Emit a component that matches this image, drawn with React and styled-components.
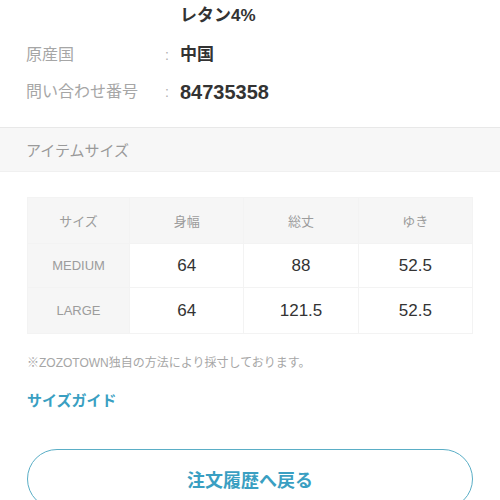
import React from "react";
import styled, { createGlobalStyle } from "styled-components";

const GlobalStyle = createGlobalStyle`
  body {
    margin: 0;
    background: #fff;
    font-family: "Liberation Sans", "Noto Sans CJK JP", sans-serif;
    color: #333;
  }
`;

const Page = styled.div`
  width: 500px;
  height: 500px;
  overflow: hidden;
`;

const InfoList = styled.dl`
  margin: -20px 0 0;
  padding: 0 26px 23px;
  display: flex;
  flex-direction: column;
  gap: 13px;
`;

const InfoRow = styled.div`
  display: grid;
  grid-template-columns: 139px 15px 1fr;
  line-height: 24px;
  padding-top: ${(p) => (p.$first ? "0" : "0")};
  &:nth-child(2) {
    margin-top: 2px;
  }
`;

const Label = styled.dt`
  font-size: 16px;
  color: #a6a6a6;
  white-space: nowrap;
`;

const Colon = styled.span`
  font-size: 14px;
  color: #b0b0b0;
`;

const Value = styled.dd`
  margin: 0;
  font-size: ${(p) => (p.$num ? "20px" : "17px")};
  font-weight: 700;
  color: #333;
`;

const SectionHeader = styled.div`
  height: 45px;
  display: flex;
  align-items: center;
  padding: 0 26px;
  background: #f7f7f7;
  border-top: 1px solid #e8e8e8;
  border-bottom: 1px solid #f0f0f0;
  box-sizing: border-box;
  font-size: 15px;
  color: #9a9a9a;
`;

const Body = styled.div`
  padding: 25px 27px 0 27px;
`;

const SizeTable = styled.div`
  display: grid;
  grid-template-columns: 101px 1fr 1fr 1fr;
  grid-template-rows: 45px 43px 45px;
  gap: 1px;
  background: #f3f3f3;
  border: 1px solid #f3f3f3;
`;

const Cell = styled.div`
  display: flex;
  align-items: center;
  justify-content: center;
  background: ${(p) => (p.$head ? "#f6f6f6" : "#fff")};
  color: ${(p) => (p.$head ? "#9c9c9c" : "#333")};
  font-size: ${(p) => (p.$head ? "13px" : "17px")};
`;

const Note = styled.p`
  margin: 20px 0 0;
  font-size: 12px;
  line-height: 18px;
  color: #a6a6a6;
`;

const GuideLink = styled.a`
  display: block;
  margin-top: 18px;
  font-size: 15px;
  line-height: 22px;
  font-weight: 700;
  color: #3a9fc2;
  text-decoration: none;
`;

const BackButton = styled.button`
  display: flex;
  align-items: center;
  justify-content: center;
  width: 100%;
  height: 60px;
  margin-top: 37px;
  border: 1.5px solid #5aaec6;
  border-radius: 30px;
  background: #fff;
  font-family: inherit;
  font-size: 18px;
  font-weight: 700;
  color: #3a9fc2;
`;

const heads = ["サイズ", "身幅", "総丈", "ゆき"];
const rows = [
  ["MEDIUM", "64", "88", "52.5"],
  ["LARGE", "64", "121.5", "52.5"],
];

export default function App() {
  return (
    <Page>
      <GlobalStyle />
      <InfoList>
        <InfoRow>
          <Label>素材</Label>
          <Colon>:</Colon>
          <Value>
            ポリエステル96% ポリウ
            <br />
            レタン4%
          </Value>
        </InfoRow>
        <InfoRow>
          <Label>原産国</Label>
          <Colon>:</Colon>
          <Value>中国</Value>
        </InfoRow>
        <InfoRow>
          <Label>問い合わせ番号</Label>
          <Colon>:</Colon>
          <Value $num>84735358</Value>
        </InfoRow>
      </InfoList>

      <SectionHeader>アイテムサイズ</SectionHeader>

      <Body>
        <SizeTable>
          {heads.map((h) => (
            <Cell key={h} $head>
              {h}
            </Cell>
          ))}
          {rows.map((r) =>
            r.map((v, i) => (
              <Cell key={r[0] + i} $head={i === 0}>
                {v}
              </Cell>
            ))
          )}
        </SizeTable>
        <Note>※ZOZOTOWN独自の方法により採寸しております。</Note>
        <GuideLink href="#">サイズガイド</GuideLink>
        <BackButton>注文履歴へ戻る</BackButton>
      </Body>
    </Page>
  );
}
